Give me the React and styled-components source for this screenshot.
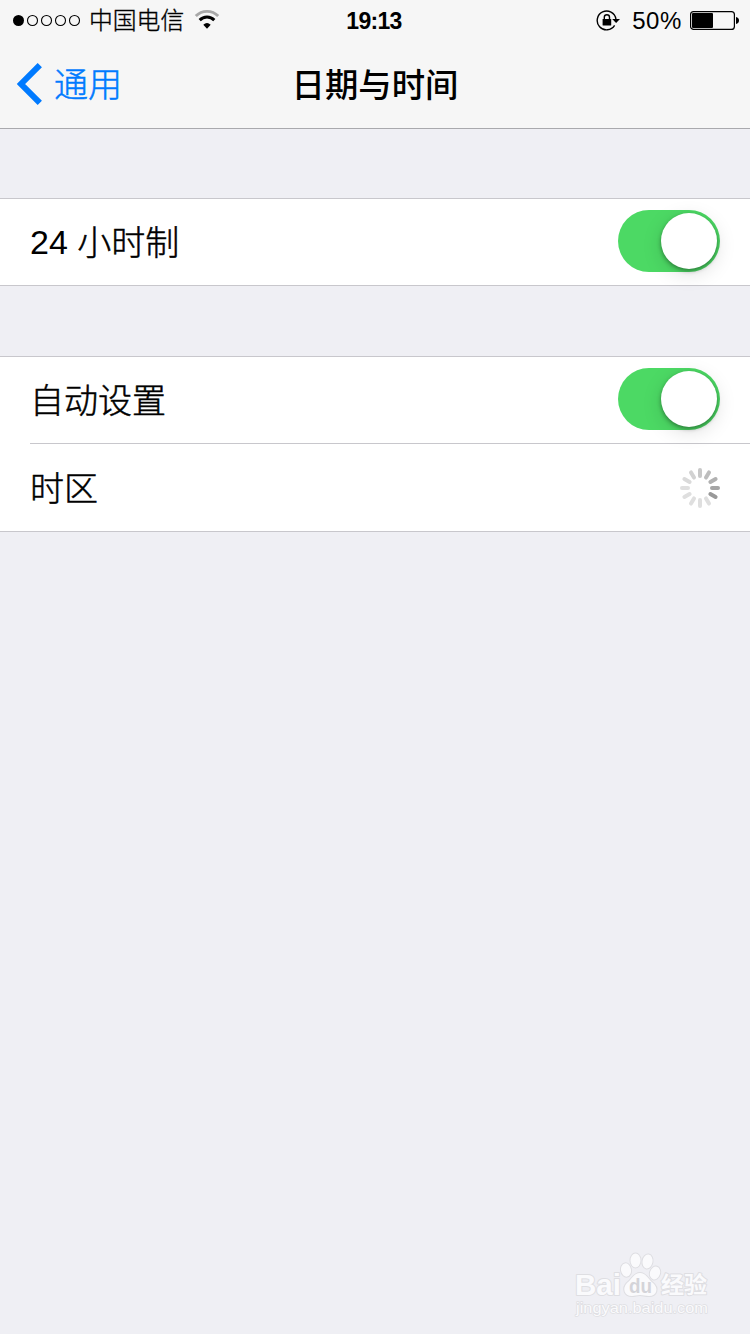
import React from 'react';
import styled, { createGlobalStyle } from 'styled-components';


const GlobalStyle = createGlobalStyle`
    body {
        margin: 0;
        background-color: #efeff4;
        font-family: "Liberation Sans", "Noto Sans CJK SC", sans-serif;
        color: #000;
        -webkit-font-smoothing: antialiased;
    }
`;

const Screen = styled.div`
    position: relative;
    width: 750px;
    height: 1334px;
    overflow: hidden;
    background-color: #efeff4;
`;

const Header = styled.header`
    height: 128px;
    background-color: #f6f6f6;
    border-bottom: 1px solid #a9a9ad;
`;

const Columns = styled.div`
    display: grid;
    grid-template-columns: 1fr auto 1fr;
    align-items: center;
    height: ${({ height }) => height}px;
`;

const StatusLeft = styled.div`
    display: flex;
    align-items: center;
    padding-left: 12px;
`;

const StatusRight = styled.div`
    display: flex;
    align-items: center;
    justify-content: flex-end;
    padding-right: 11px;
`;

const Carrier = styled.span`
    margin: 0 9.5px 0 7px;
    padding-top: 1px;
    font-size: 23.8px;
    font-weight: 300;
    line-height: 38px;
    -webkit-text-stroke: 0.35px;
`;

const Clock = styled.span`
    padding-top: 2px;
    margin-right: 2px;
    font-size: 23px;
    font-weight: 700;
    letter-spacing: -0.7px;
    line-height: 38px;
`;

const Percent = styled.span`
    margin: 0 8px 0 12px;
    padding-top: 2px;
    font-size: 24px;
    letter-spacing: 0.6px;
    line-height: 38px;
`;

const BackButton = styled.div`
    display: flex;
    align-items: center;
    padding-left: 16px;
    color: #007aff;
    font-size: 34px;
    font-weight: 300;
    line-height: 44px;

    span {
        margin-left: 11px;
        padding-top: 2px;
        -webkit-text-stroke: 0.5px;
    }
`;

const Title = styled.h1`
    margin: 0;
    padding-top: 3px;
    font-size: 33.4px;
    font-weight: 500;
    line-height: 44px;
`;

const Group = styled.section`
    margin-top: ${({ gap }) => gap}px;
    background-color: #fff;
    border-top: 1px solid #c8c7cc;
    border-bottom: 1px solid #c8c7cc;
`;

const Row = styled.div`
    display: flex;
    align-items: center;
    justify-content: space-between;
    height: ${({ height }) => height}px;
    margin-left: 30px;
    padding-right: 30px;
    ${({ divided }) => divided && `border-bottom: 1px solid #c8c7cc;`}
`;

const Label = styled.span`
    padding-top: 2px;
    font-size: 34px;
    font-weight: 300;
    line-height: 44px;
    -webkit-text-stroke: 0.5px;
`;

const Digits = styled.span`
    vertical-align: 1px;
    line-height: 1;
    -webkit-text-stroke: 0;
`;

const Track = styled.div`
    display: flex;
    justify-content: flex-end;
    box-sizing: border-box;
    width: 102px;
    height: 62px;
    margin-bottom: 2px;
    padding: 3px;
    border-radius: 31px;
    background-color: #4cd964;
`;

const Knob = styled.div`
    width: 56px;
    height: 56px;
    border-radius: 50%;
    background-color: #fff;
    box-shadow: 0 2px 4px rgba(0, 0, 0, 0.36), 0 5px 20px rgba(0, 0, 0, 0.13);
`;

const Watermark = styled.svg`
    position: absolute;
    left: 565px;
    top: 1245px;
`;


function SignalDots() {
    return (
        <svg width="70" height="40">
            {[0, 1, 2, 3, 4].map(i => (
                <circle key={i} cx={6.5 + i * 14} cy="20.5" r={i === 0 ? 5.5 : 5} fill={i === 0 ? '#000' : 'none'} stroke={i === 0 ? 'none' : '#000'} strokeWidth="1.1" />
            ))}
        </svg>
    );
}

function WifiIcon() {
    return (
        <svg width="26" height="40" fill="none">
            <path d="M1.8 16.1A15.6 15.6 0 0 1 24.2 16.1" stroke="#a8a8a8" strokeWidth="2.9" />
            <path d="M5.7 20.1A10.2 10.2 0 0 1 20.3 20.1" stroke="#000" strokeWidth="3" />
            <path d="M13 28.8L9.3 24.8Q13 21.2 16.7 24.8Z" fill="#000" />
        </svg>
    );
}

function LockIcon() {
    return (
        <svg width="24" height="40" fill="none">
            <path d="M18.6 25.4A9.4 9.4 0 1 1 19.9 19" stroke="#000" strokeWidth="1.4" />
            <path d="M16.2 18.9H24L20.1 23.1Z" fill="#000" />
            <rect x="6.6" y="19" width="8.6" height="6.6" rx="0.6" fill="#000" />
            <path d="M8.3 19.5V17.3A2.6 2.6 0 0 1 13.5 17.3V19.5" stroke="#000" strokeWidth="1.4" />
        </svg>
    );
}

function BatteryIcon() {
    return (
        <svg width="49" height="40">
            <rect x="0.6" y="11.6" width="43.8" height="17.8" rx="3" fill="none" stroke="#000" strokeWidth="1.2" />
            <rect x="2" y="13" width="21" height="15" rx="1" fill="#000" />
            <path d="M46 17Q49 17.6 49 20.5Q49 23.4 46 24Z" fill="#000" />
        </svg>
    );
}

function Spinner() {
    // clockwise from twelve o'clock
    const shades = ['#c8c8c8', '#bdbdbd', '#b1b1b1', '#a5a5a5', '#999', '#dfdfdf', '#dfdfdf', '#dfdfdf', '#dfdfdf', '#dfdfdf', '#dadada', '#d2d2d2'];

    return (
        <svg width="40" height="40">
            {shades.map((shade, i) => (
                <rect key={i} x="18" y="0" width="4" height="10" rx="2" fill={shade} transform={`rotate(${i * 30} 20 20)`} />
            ))}
        </svg>
    );
}

function Switch() {
    return <Track><Knob /></Track>;
}

function BaiduMark() {
    return (
        <Watermark width="150" height="80" fill="#fafafc" stroke="#dedee2" strokeWidth="2" strokeLinejoin="round" paintOrder="stroke" fontFamily='"Liberation Sans", "Noto Sans CJK SC", sans-serif'>
            <text x="10" y="50" fontSize="30" fontWeight="700" textLength="46" lengthAdjust="spacingAndGlyphs">Bai</text>
            <ellipse cx="61" cy="25" rx="5" ry="6.7" transform="rotate(-10 61 25)" />
            <ellipse cx="70.5" cy="15.5" rx="5" ry="7" />
            <ellipse cx="82.5" cy="16.5" rx="5" ry="7" transform="rotate(10 82.5 16.5)" />
            <ellipse cx="90" cy="28" rx="5" ry="6.5" transform="rotate(18 90 28)" />
            <path d="M75 31C69 31 67 37 62 41C57 46 59 54 67 54C70 54 72 53 75 53C78 53 80 54 84 54C92 54 94 46 88 41C83 37 81 31 75 31Z" transform="translate(0 -3)" />
            <text x="64" y="48" fontSize="21" fontWeight="700" fill="#d4d4d9" stroke="none" textLength="23" lengthAdjust="spacingAndGlyphs">du</text>
            <text x="96" y="48" fontSize="23" fontWeight="700">经验</text>
            <text x="11" y="68" fontSize="15" strokeWidth="1.4" textLength="132" lengthAdjust="spacingAndGlyphs">jingyan.baidu.com</text>
        </Watermark>
    );
}


function App() {
    return (
        <Screen>
            <GlobalStyle />
            <Header>
                <Columns height={40}>
                    <StatusLeft>
                        <SignalDots />
                        <Carrier>中国电信</Carrier>
                        <WifiIcon />
                    </StatusLeft>
                    <Clock>19:13</Clock>
                    <StatusRight>
                        <LockIcon />
                        <Percent>50%</Percent>
                        <BatteryIcon />
                    </StatusRight>
                </Columns>
                <Columns height={88}>
                    <BackButton>
                        <svg width="27" height="44" fill="none" stroke="#007aff" strokeWidth="6">
                            <path d="M23.8 3.2L5 22L23.8 40.8" />
                        </svg>
                        <span>通用</span>
                    </BackButton>
                    <Title>日期与时间</Title>
                </Columns>
            </Header>
            <Group gap={69}>
                <Row height={86}>
                    <Label><Digits>24</Digits> 小时制</Label>
                    <Switch />
                </Row>
            </Group>
            <Group gap={70}>
                <Row height={86} divided>
                    <Label>自动设置</Label>
                    <Switch />
                </Row>
                <Row height={87}>
                    <Label>时区</Label>
                    <Spinner />
                </Row>
            </Group>
            <BaiduMark />
        </Screen>
    );
}

export default App;
